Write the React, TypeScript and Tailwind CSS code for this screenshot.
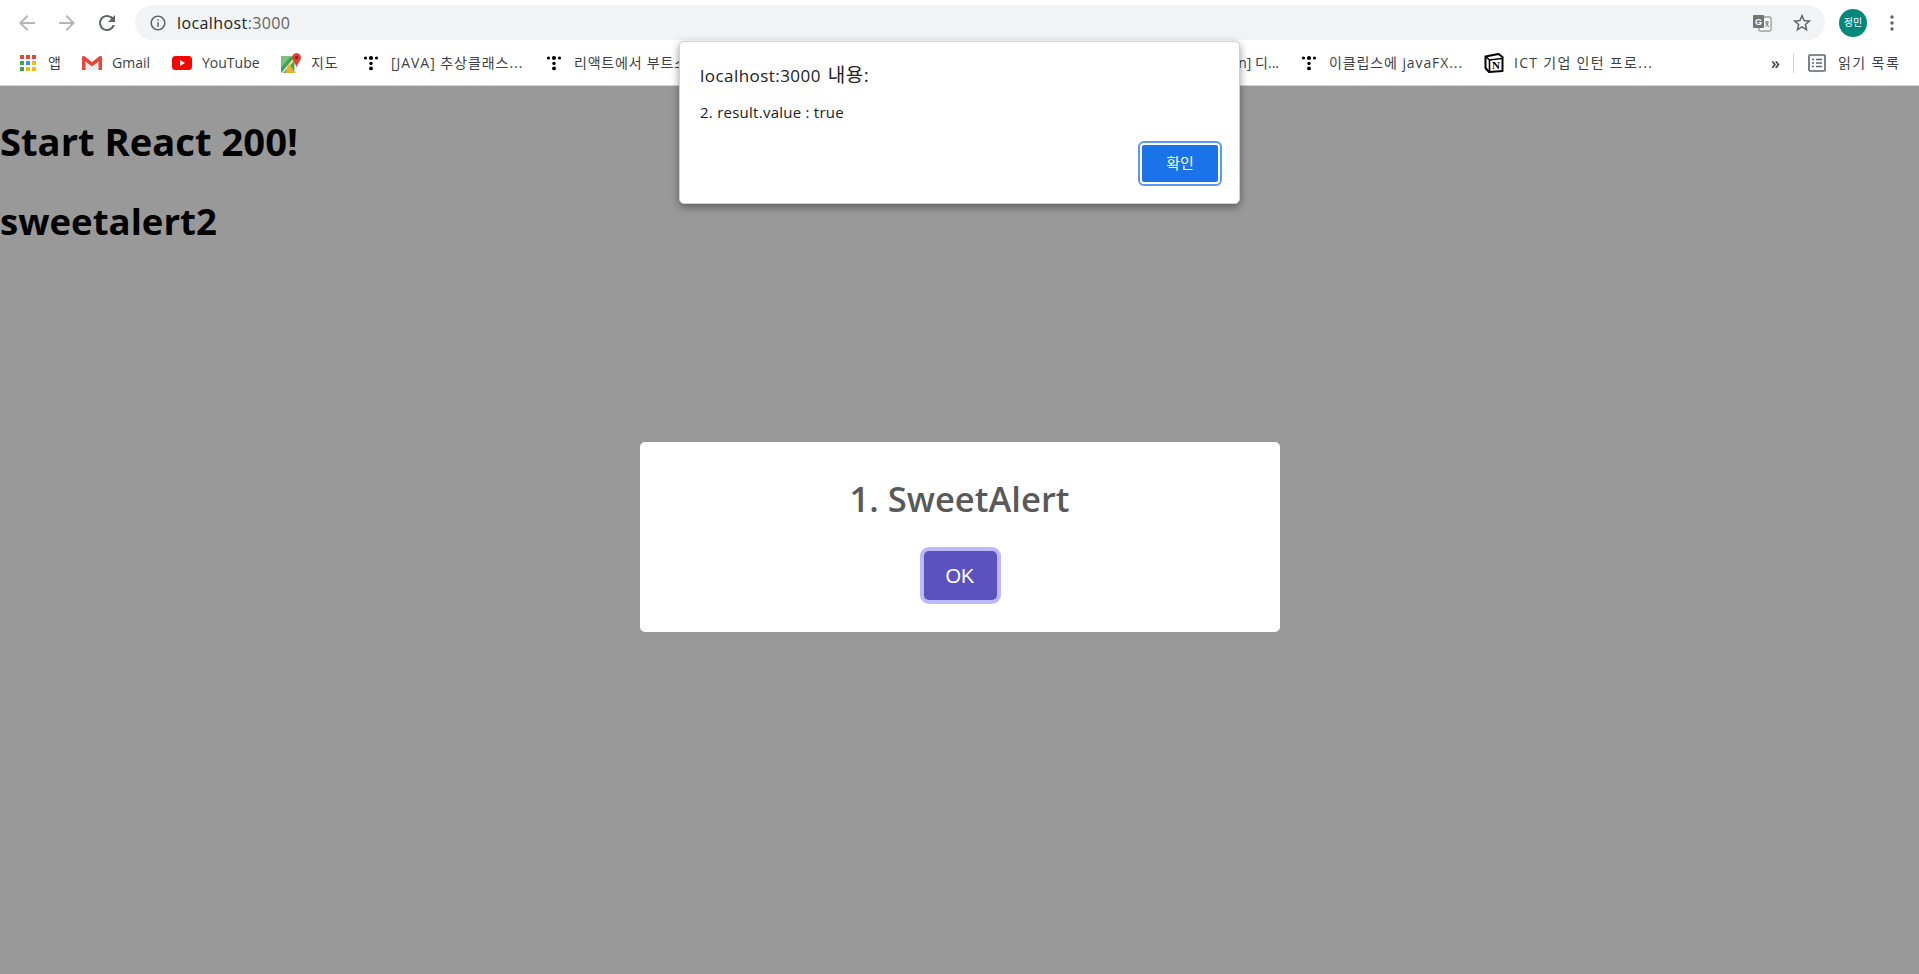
const uiFont = "font-['Open_Sans','Noto_Sans_CJK_KR',sans-serif]";

function Arrow({ flip }: { flip?: boolean }) {
  return (
    <svg viewBox="0 0 24 24" className={flip ? "h-6 w-6 -scale-x-100 fill-[#b4b6b9]" : "h-6 w-6 fill-[#b4b6b9]"}>
      <path d="M20 11H7.83l5.59-5.59L12 4l-8 8 8 8 1.41-1.41L7.83 13H20v-2z" />
    </svg>
  );
}

function AppsIcon() {
  const colors = ["#ea4335", "#ea4335", "#ea4335", "#34a853", "#4285f4", "#fbbc05", "#34a853", "#fbbc05", "#fbbc05"];
  return (
    <svg viewBox="0 0 16 16" className="h-4 w-4">
      {colors.map((c, i) => (
        <rect key={i} x={(i % 3) * 6} y={Math.floor(i / 3) * 6} width="4" height="4" fill={c} />
      ))}
    </svg>
  );
}

function GmailIcon() {
  return (
    <svg viewBox="0 0 20 16" className="h-4 w-5 shrink-0">
      <path d="M1 2 L10 9 L19 2 V15 H1 Z" fill="#ececec" />
      <path d="M0 2.5 C0 1 1.5 .5 2.6 1.3 L10 7 L17.4 1.3 C18.5 .5 20 1 20 2.5 V15 H16.5 V6.5 L10 11.5 L3.5 6.5 V15 H0 Z" fill="#e4483b" />
    </svg>
  );
}

function YouTubeIcon() {
  return (
    <svg viewBox="0 0 20 14" className="h-[14px] w-5 shrink-0">
      <rect width="20" height="14" rx="3.5" fill="#ff0000" />
      <path d="M8 4 L13 7 L8 10 Z" fill="#fff" />
    </svg>
  );
}

function MapsIcon() {
  return (
    <svg viewBox="0 0 18 18" className="h-5 w-5 shrink-0">
      <path d="M0 3 H12 V18 H0 Z" fill="#35a853" />
      <path d="M0 18 L7 9 L13 18 Z" fill="#4285f4" />
      <path d="M0 3 H9 L0 13 Z" fill="#7fbf7a" />
      <path d="M0 18 L12 4 V7 L2 18 Z" fill="#f3e6a0" />
      <path d="M7 9 L13 18 H4 Z" fill="#fbbc05" opacity=".85" />
      <path d="M14 0 C11.5 0 10 2 10 4 C10 7 13 9 14 13 C15 9 18 7 18 4 C18 2 16.5 0 14 0 Z" fill="#db4437" />
      <circle cx="14" cy="4" r="1.4" fill="#8a1f14" />
    </svg>
  );
}

function TistoryIcon() {
  return (
    <svg viewBox="0 0 16 16" className="h-4 w-4 fill-black">
      <circle cx="2.5" cy="3" r="1.6" />
      <circle cx="8" cy="3" r="2.1" />
      <circle cx="13.5" cy="3" r="1.6" />
      <circle cx="8" cy="8.4" r="1.7" />
      <circle cx="8" cy="13.4" r="1.9" />
    </svg>
  );
}

function NotionIcon() {
  return (
    <svg viewBox="0 0 20 20" className="h-5 w-5 shrink-0">
      <path d="M1.5 3.5 L14.5 1 L18.5 4 V18 L5 19 L1.5 15 Z" fill="#fff" stroke="#000" strokeWidth="2" strokeLinejoin="round" />
      <path d="M2 4 L5.5 7 L18 5.5" fill="none" stroke="#000" strokeWidth="1.6" />
      <path d="M5.5 7 V18.5" fill="none" stroke="#000" strokeWidth="1.6" />
      <text x="12" y="16" textAnchor="middle" fontSize="11" fontWeight="700" fontFamily="Liberation Serif, serif" fill="#000">N</text>
    </svg>
  );
}

function Bookmark({ icon, label, width, tracking = "" }: { icon: React.ReactNode; label: string; width: string; tracking?: string }) {
  return (
    <div className={`flex shrink-0 items-center gap-[11px] ${width}`}>
      <span className="flex w-[18px] shrink-0 justify-center">{icon}</span>
      <span className={`whitespace-nowrap ${tracking}`}>{label}</span>
    </div>
  );
}

function BrowserBar() {
  return (
    <header className={`h-[86px] border-b border-[#d4d4d4] bg-white text-[#3c4043] ${uiFont}`}>
      <div className="flex h-[44px] items-center pt-[1px]">
        <div className="flex w-[135px] items-center gap-[16px] pl-[15px]">
          <Arrow />
          <Arrow flip />
          <svg viewBox="0 0 24 24" className="h-6 w-6 fill-[#5f6368]">
            <path d="M17.65 6.35C16.2 4.9 14.21 4 12 4c-4.42 0-7.99 3.58-7.99 8s3.57 8 7.99 8c3.73 0 6.84-2.55 7.73-6h-2.08c-.82 2.33-3.04 4-5.65 4-3.31 0-6-2.69-6-6s2.69-6 6-6c1.66 0 3.14.69 4.22 1.78L13 11h7V4l-2.35 2.35z" />
          </svg>
        </div>
        <div className="flex h-[35px] w-[1690px] items-center rounded-full bg-[#f1f3f4] pl-[14px] pr-[12px]">
          <svg viewBox="0 0 24 24" className="h-[18px] w-[18px] fill-[#5f6368]">
            <path d="M11 7h2v2h-2zm0 4h2v6h-2zm1-9C6.48 2 2 6.48 2 12s4.48 10 10 10 10-4.48 10-10S17.52 2 12 2zm0 18c-4.41 0-8-3.59-8-8s3.59-8 8-8 8 3.59 8 8-3.59 8-8 8z" />
          </svg>
          <span className="ml-[10px] text-[16px] tracking-[0.4px] text-[#202124]">
            localhost<span className="text-[#5f6368]">:3000</span>
          </span>
          <div className="ml-auto flex items-center gap-[19px]">
            <svg viewBox="0 0 20 20" className="h-5 w-5">
              <rect x="7" y="4" width="12" height="14" rx="1" fill="#fff" stroke="#70757a" />
              <rect x="1" y="2" width="11" height="13" rx="1" fill="#70757a" />
              <text x="6.5" y="11.5" textAnchor="middle" fontSize="9" fontWeight="700" fontFamily="Liberation Sans, sans-serif" fill="#fff">G</text>
              <path d="M13 9 H17 M15 8 V9.5 M14 10 L17 14 M16 10 L13.5 14" stroke="#70757a" fill="none" />
            </svg>
            <svg viewBox="0 0 24 24" className="h-[22px] w-[22px] fill-[#5f6368]">
              <path d="M22 9.24l-7.19-.62L12 2 9.19 8.63 2 9.24l5.46 4.73L5.82 21 12 17.27 18.18 21l-1.63-7.03L22 9.24zM12 15.4l-3.76 2.27 1-4.28-3.32-2.88 4.38-.38L12 6.1l1.71 4.04 4.38.38-3.32 2.88 1 4.28L12 15.4z" />
            </svg>
          </div>
        </div>
        <span className="ml-[14px] flex h-7 w-7 items-center justify-center rounded-full bg-[#00897b] text-[10px] text-white">정민</span>
        <svg viewBox="0 0 4 16" className="ml-[23px] h-4 w-1 fill-[#5f6368]">
          <circle cx="2" cy="2" r="1.7" />
          <circle cx="2" cy="8" r="1.7" />
          <circle cx="2" cy="14" r="1.7" />
        </svg>
      </div>
      <div className="flex h-[41px] items-center pb-[4px] pl-[19px] text-[14px]">
        <Bookmark icon={<AppsIcon />} label="앱" width="w-[64px]" tracking="tracking-[0.8px]" />
        <Bookmark icon={<GmailIcon />} label="Gmail" width="w-[90px]" />
        <Bookmark icon={<YouTubeIcon />} label="YouTube" width="w-[109px]" />
        <Bookmark icon={<MapsIcon />} label="지도" width="w-[80px]" tracking="tracking-[0.8px]" />
        <Bookmark icon={<TistoryIcon />} label="[JAVA] 추상클래스..." width="w-[183px]" tracking="tracking-[0.95px]" />
        <Bookmark icon={<TistoryIcon />} label="리액트에서 부트스트랩..." width="w-[190px]" tracking="tracking-[0.8px]" />
        <div className="flex w-[565px] shrink-0 justify-end pr-[21px]">
          <span className="whitespace-nowrap">n] 디...</span>
        </div>
        <Bookmark icon={<TistoryIcon />} label="이클립스에 javaFX..." width="w-[185px]" tracking="tracking-[0.9px]" />
        <Bookmark icon={<NotionIcon />} label="ICT 기업 인턴 프로..." width="w-[286px]" tracking="tracking-[1.3px]" />
        <span className="w-[17px] text-[16px] leading-none font-semibold">»</span>
        <span className="ml-[5px] h-[20px] w-px bg-[#d4d4d4]" />
        <svg viewBox="0 0 18 18" className="ml-[14px] h-[18px] w-[18px]">
          <rect x="1" y="1" width="16" height="16" rx="1" fill="none" stroke="#5f6368" strokeWidth="1.6" />
          <path d="M4 5.5h2M8 5.5h6M4 9h2M8 9h6M4 12.5h2M8 12.5h6" stroke="#5f6368" strokeWidth="1.5" />
        </svg>
        <span className="ml-[12px] whitespace-nowrap tracking-[1.4px]">읽기 목록</span>
      </div>
    </header>
  );
}

function NativeAlert() {
  return (
    <div className={`absolute top-[41px] left-[679px] z-20 h-[163px] w-[561px] rounded-[5px] border border-[#d0d0d0] bg-white pt-[22px] pr-[19px] pl-[20px] text-[#202124] shadow-[0_3px_8px_rgba(0,0,0,0.4)] ${uiFont}`}>
      <p className="text-[17px] leading-[22px] tracking-[0.45px]">
        localhost:3000 <span className="ml-[2px] text-[19px] tracking-[0.5px]">내용:</span>
      </p>
      <p className="mt-[15px] text-[15px] leading-[20px] tracking-[0.25px]">2. result.value : true</p>
      <div className="mt-[21px] flex justify-end">
        <button className="flex h-[41px] w-[80px] items-center justify-center rounded-[4px] border-2 border-white bg-[#1a73e8] text-[15px] text-white outline-2 outline-[#5b97f5]">
          확인
        </button>
      </div>
    </div>
  );
}

function SweetAlert() {
  return (
    <div className="absolute inset-0 flex items-center justify-center pt-[14px]">
      <div className={`flex h-[190px] w-[640px] flex-col items-center rounded-[5px] bg-white pt-[32px] ${uiFont}`}>
        <h2 className="text-[34.6px] leading-[50px] font-semibold text-[#595959]">1. SweetAlert</h2>
        <button className="mt-[27px] ml-[1px] flex h-[49px] w-[73px] items-center justify-center rounded-[5px] bg-[#5b52bf] font-['Liberation_Sans',sans-serif] text-[20px] text-white ring-4 ring-[#bdb7fb]">
          OK
        </button>
      </div>
    </div>
  );
}

export default function App() {
  return (
    <div className="relative flex h-[974px] flex-col overflow-hidden bg-[#999999]">
      <BrowserBar />
      <main className={`relative flex-1 text-black ${uiFont}`}>
        <h1 className="mt-[30px] text-[38.2px] leading-[50px] font-bold">Start React 200!</h1>
        <h2 className="mt-[30px] text-[36.6px] leading-[50px] font-bold">sweetalert2</h2>
        <SweetAlert />
      </main>
      <NativeAlert />
    </div>
  );
}
